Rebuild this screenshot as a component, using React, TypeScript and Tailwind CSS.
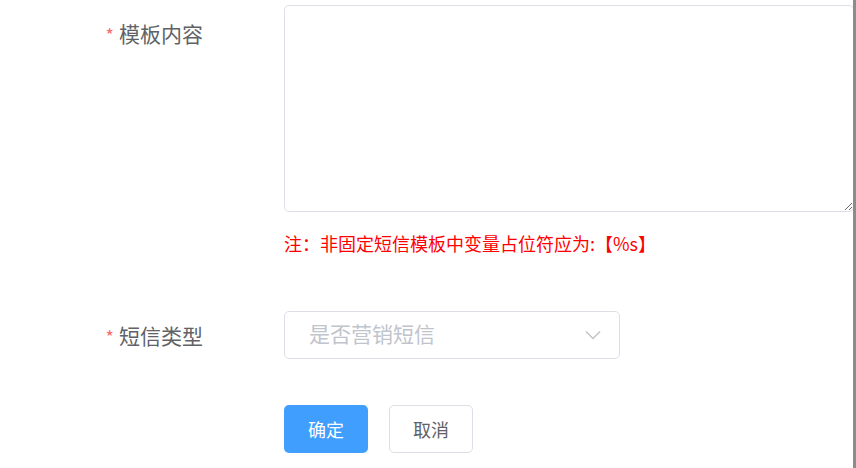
import React from "react";

export default function App() {
  const font = { fontFamily: '"Noto Sans CJK SC", "Noto Sans", sans-serif' };
  return (
    <div className="relative w-[856px] h-[468px] bg-white overflow-hidden" style={font}>
      <div className="flex flex-col pt-[5px]">
        <div className="flex gap-[81px]">
          <div className="w-[203px] pt-[12px] text-right text-[21px] leading-[32px] text-[#606266]">
            <span className="text-[#f56c6c] text-[18px] mr-[5px]">*</span>模板内容
          </div>
          <div className="flex flex-col">
            <textarea className="w-[570px] h-[207px] border border-[#dcdfe6] rounded-[5px] outline-none resize" />
            <div className="mt-[18px] text-[18px] leading-[26px] text-[#ff0000]">注：非固定短信模板中变量占位符应为:【%s】</div>
          </div>
        </div>
        <div className="flex gap-[81px] mt-[55px] items-center">
          <div className="w-[203px] text-right text-[21px] leading-[32px] text-[#606266]">
            <span className="text-[#f56c6c] text-[18px] mr-[5px]">*</span>短信类型
          </div>
          <div className="w-[336px] h-[48px] border border-[#dcdfe6] rounded-[5px] flex items-center justify-between pl-[24px] pr-[18px]">
            <span className="text-[21px] text-[#c0c4cc] -mt-[2px]">是否营销短信</span>
            <svg width="16" height="10" viewBox="0 0 16 10" fill="none">
              <path d="M1 1.5 L8 8.5 L15 1.5" stroke="#c0c4cc" strokeWidth="1.5" />
            </svg>
          </div>
        </div>
        <div className="flex gap-[21px] mt-[46px] ml-[284px]">
          <button className="w-[84px] h-[48px] rounded-[5px] bg-[#409eff] text-white text-[18px]">确定</button>
          <button className="w-[84px] h-[48px] rounded-[5px] bg-white border border-[#dcdfe6] text-[#606266] text-[18px]">取消</button>
        </div>
      </div>
      <div className="absolute right-0 top-0 w-[3px] h-full bg-[#8c8c8c]" />
    </div>
  );
}
